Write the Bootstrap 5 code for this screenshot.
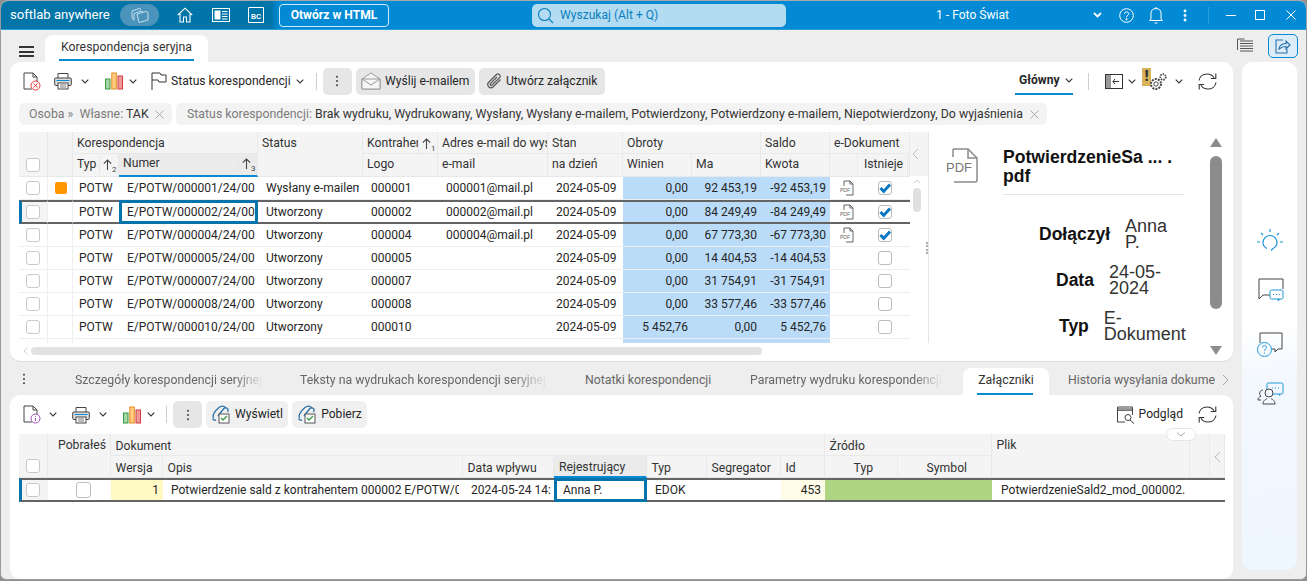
<!DOCTYPE html>
<html lang="pl">
<head>
<meta charset="utf-8">
<title>softlab anywhere</title>
<link href="https://cdn.jsdelivr.net/npm/bootstrap@5.3.0/dist/css/bootstrap.min.css" rel="stylesheet">
<style>
html,body{height:581px;overflow:hidden;background:#8f8f8f}
body{font-family:Roboto,"Liberation Sans",sans-serif;font-size:12px;color:#262626}
svg{display:block;flex:none}
.app{width:1307px;height:580px;background:#eee;border:1px solid #9a9a9a;border-top-color:#a8a8a8;border-radius:8px 8px 6px 6px;overflow:hidden}
/* title bar */
.tbar{height:29px;background:linear-gradient(90deg,#0174a8 0,#0174a8 270px,#028bd4 278px);color:#fff;border-bottom:1px solid #2a9fdc;flex:none}
.brand{font-size:13.1px;width:119px;padding-left:9px;white-space:nowrap}
.cube{width:39px;height:22px;border-radius:11px;background:#4b93bb}
.htmlbtn{height:23px;width:110px;border:1px solid #cfeaf8;border-radius:4px;background:transparent;color:#fff;font-weight:700;font-size:12.1px;padding:0}
.srch{width:254px;height:23px;background:#b3dcf3;border-radius:5px;color:#0b7fbd;font-size:12.1px;padding-left:5px;gap:6px}
.firm{font-size:12.1px;width:73px;white-space:nowrap}
.vsep{width:1px;height:17px;background:#2a9fdc}
.sp4{margin-left:4px}.sp5{margin-left:5px}.sp6{margin-left:6px}.sp8{margin-left:8px}.sp9{margin-left:9px}.sp10{margin-left:10px}.sp11{margin-left:11px}.sp12{margin-left:12px}.sp13{margin-left:13px}.sp14{margin-left:14px}.sp15{margin-left:15px}.sp16{margin-left:16px}.sp17{margin-left:17px}.sp18{margin-left:18px}.sp19{margin-left:19px}.sp21{margin-left:21px}
.sp84{margin-left:84px}.sp143{margin-left:143px}.sp150{margin-left:150px}.spn2{margin-left:-2px}
/* tabs */
.tabrow{height:32px;flex:none}
.burger{width:15px;height:11px;margin-left:18px;border-top:2px solid #333;border-bottom:2px solid #333;position:relative}
.burger::after{content:"";position:absolute;left:0;right:0;top:2.5px;height:2px;background:#333}
.maintab{width:163px;height:27px;margin-left:11px;margin-top:5px;background:#fff;border-radius:8px 8px 0 0;font-size:12.3px;position:relative;padding-left:16px;line-height:25px;color:#333}
.maintab::after,.lowtab.on::after{content:"";position:absolute;height:2px;background:#0a8ad2;bottom:0}
.maintab::after{left:14px;right:14px;bottom:1px}
.sharebtn{width:30px;height:24px;border:1px solid #0a8ad2;border-radius:5px;background:#dcedf9;padding:0;margin-left:14px}
/* cards */
.lcol{width:1223px;margin-left:9px}
.sheet{background:#fff;border-radius:10px}
.upper{height:299px;box-shadow:0 1px 0 #ddd}
.tools{height:38px;padding-left:13px;font-size:12.1px;color:#262626;flex:none}
.tbtn{height:27px;background:#e6e6e6;border:0;border-radius:5px;padding:0;font-size:12.1px;color:#262626;white-space:nowrap;gap:4px;margin-left:4px}
.tbtn.light{background:#f0f0f0}
.tbtn.bdot{width:29px;margin-left:6px}
.wmail{width:119px}.wattach{width:126px}.wview{width:82px}.wget{width:75px}
.sepv{width:1px;height:17px;background:#cfcfcf}
.glowny{width:58px;height:28px;border-bottom:2px solid #0a8ad2;font-weight:700;font-size:12.1px;padding-left:4px;gap:5px}
.warnbox{width:9px;height:18px;background:#d8b35a;color:#333;font-weight:900;font-size:15px;line-height:17px;text-align:center;margin-top:-8px}
.chips{height:22px;padding-left:9px;margin-top:3px;gap:4px;flex:none}
.chip{height:22px;background:#f3f3f3;border-radius:5px;padding:0 8px 0 10px;font-size:12.33px;white-space:nowrap;color:#7c7c7c}
.chip b{font-weight:400;color:#333}
.chipa{width:153px}.chipb{width:871px;padding-left:11px}
.chipx{margin-left:auto}
/* grids */
.gridzone{margin:7px 0 0 9px;height:226px}
.gridw{width:910px;height:211px;overflow:hidden}
.tw{width:891px;flex:none}
.grid{table-layout:fixed;border-collapse:separate;border-spacing:0;width:100%;margin:0;font-size:12px;color:#262626}
.grid>*>tr>*{padding:0;border:0;box-shadow:none;background:transparent;vertical-align:middle;white-space:nowrap;overflow:hidden;font-weight:400}
.grid>thead>tr>th{background:#f4f4f4;height:22px;border-right:1px solid #e9e9e9;border-bottom:1px solid #e9e9e9;padding-left:4px;color:#333;font-size:12.2px}
.grid>thead>tr.drop>th{padding-top:2px}
.grid>thead>tr.lift>th{padding-bottom:2px}
.grid>thead>tr>th.ptop{padding-top:2px;vertical-align:top}
.grid>thead>tr>th.thcb{padding:0 0 0 7px;vertical-align:bottom}
.grid>tbody>tr>td{height:23px;border-bottom:1px solid #eee;padding-left:8px}
.grid>tbody>tr>td.cb{padding-left:7px;border-right:1px solid #eee}
.grid>tbody>tr>td.mk{border-right:1px solid #eee}
.grid>tbody>tr>td.p6{padding-left:6px}
.grid>tbody>tr>td.clr{padding-right:4px}
.clipt{overflow:hidden}
.grid>tbody>tr>td.num{text-align:right;padding:0 4px 0 0;background:#badcf8}
.grid>tbody>tr>td.ck{text-align:center;padding-left:0}
.grid>tbody>tr>td.ckp{padding-left:6px}
.grid>tbody>tr>td.ckq{padding-left:4px}
.grid>tbody>tr.sel>td{border-top:2px solid #646464;border-bottom:2px solid #646464}
.grid>tbody>tr.sel>td:first-child{border-left:3px solid #0673ab;padding-left:4px;background:#f4f4f4}
.grid>tbody>tr.sel>td.foc{border:3px solid #0673ab;padding-left:5px}
.grid>thead>tr>th.cur{background:#ebebeb;border-bottom:2px solid #0a8ad2}
.hs{display:flex;align-items:center;justify-content:space-between;padding-right:1px}
.hsort{position:relative;width:18px;height:19px;flex:none;border-left:1px solid #e7e7e7;padding-left:3px;display:flex;align-items:center}
.hsort span{font-size:8px;line-height:8px;position:absolute;left:12px;top:11px;color:#444}
.form-check-input.box{width:14px;height:14px;margin:0;border:1px solid #c9c9c9;border-radius:3px;display:block;float:none}
.ck .form-check-input.box{margin:0 auto;border-color:#bcbcbc}
.form-check-input.box:checked{background-color:#fff;background-size:14px;background-image:url("data:image/svg+xml,%3csvg xmlns='http://www.w3.org/2000/svg' viewBox='0 0 14 14'%3e%3cpath d='M2.500 7l3.200 3.400L12 3.400' fill='none' stroke='%230a78c4' stroke-width='3'/%3e%3c/svg%3e")}
.orng{width:12px;height:12px;border-radius:2px;background:#ff9800;margin-left:-1px}
.rail{width:19px;flex:none}
.railh{height:44px;background:#f4f4f4;padding-left:2px}
.rails{width:14px;height:168px;position:relative}
.thumb{position:absolute;left:3px;top:12px;width:8px;height:24px;background:#e0e0e0;border-radius:4px}
.thup{position:absolute;left:3px;top:3px}
.railline{border-right:1px solid #e5e5e5}
.hbar{height:15px;margin-left:4px;padding-top:4px}
.hthumb{width:731px;height:8px;background:#e2e2e2;border-radius:4px;margin-left:3px}
.grip{width:2px;height:12px;border-left:2px dotted #aaa;position:absolute;left:916px;top:180px}
/* preview */
.prev{width:294px;height:226px;font-family:"Liberation Sans",Arial,sans-serif;font-size:18px;line-height:16px;color:#333;flex:none;overflow:hidden}
.prevmain{width:281px;padding:16px 0 0 16px;flex:none}
.pname{width:181px;margin-left:58px;font-weight:700;font-size:17.6px;line-height:19px;color:#111;padding-bottom:8px;border-bottom:1px solid #e5e5e5;margin-bottom:23px}
.pline{display:flex;align-items:center;gap:15px}
.pline b{color:#111;font-size:17.5px}
.pa{margin-left:94px;margin-bottom:14px}.pb{margin-left:111px;margin-bottom:14px}.pc{margin-left:114px}
.pva{width:46px}.pvb{width:62px}.pvc{width:84px}
.pbar{width:13px;position:relative}
.pthumb{position:absolute;left:0;top:24px;width:12px;height:153px;background:#8c8c8c;border-radius:6px}
.tri{position:absolute;left:0;width:0;height:0;border-left:6px solid transparent;border-right:6px solid transparent}
.triu{top:6px;border-bottom:9px solid #8c8c8c}
.trid{top:214px;border-top:9px solid #8c8c8c}
/* low tabs */
.lowbar{height:34px;position:relative;font-size:12.3px;color:#666;flex:none}
.lowtab{position:absolute;top:7px;height:27px;line-height:24px;white-space:nowrap;overflow:hidden}
.fadeout{-webkit-mask-image:linear-gradient(90deg,#000 85%,transparent 100%);mask-image:linear-gradient(90deg,#000 85%,transparent 100%)}
.lowtab.on{left:953px;width:86px;background:#fff;border-radius:8px 8px 0 0;color:#333;text-align:center}
.lowtab.on::after{left:14px;right:16px;bottom:0}
.lt1{left:65px;width:188px}.lt2{left:290px;width:248px}.lt3{left:575px;width:130px}.lt4{left:740px;width:193px}.lt5{left:1058px;width:148px}
.lowdots{position:absolute;left:12px;top:12px}
.lownext{position:absolute;left:1212px;top:13px}
.lower{height:184px;position:relative}
.lowtools{height:39px;padding-left:13px;font-size:12.1px}
.gridlow{margin-left:9px;width:1206px;overflow:hidden;height:69px}
.gridlow .grid{width:1206px}
.gridlow .grid>thead>tr>th{padding-top:2px;padding-left:4.5px;line-height:16px}
.gridlow .grid>thead>tr.drop>th{padding-top:3px}
.gridlow .grid>thead>tr>th.thcb{padding-left:7px;padding-top:0}
.gridlow .grid>thead>tr>th.ptop{padding-top:3px}
.gridlow .grid>thead>tr>th.pob{padding-left:0;padding-right:4px}
.gridlow .grid>thead>tr>th.cur{padding-left:5px}
.gridlow .grid>tbody>tr>td{height:23px;padding-left:8px}
.gridlow .grid>tbody>tr>td.cb{border-right:0}
.gridlow .grid>tbody>tr>td.fn{padding-left:9px}
.grid>tbody>tr.sel2>td{border-top:2px solid #646464;border-bottom:2px solid #646464;height:24px}
.grid>tbody>tr.sel2>td:first-child{border-left:3px solid #0673ab;padding-left:4px;background:#f4f4f4}
.gridlow .grid>tbody>tr.sel2>td.foc{border:3px solid #0673ab;padding-left:6px}
.gridlow .grid>tbody>tr>td.yl{background:#fff9c4;text-align:right;padding:0 4px 0 0}
.gridlow .grid>tbody>tr>td.yl2{background:#fffde7;text-align:right;padding:0 4px 0 0}
.gridlow .grid>tbody>tr>td.gr{background:#aed581}
.box15.form-check-input{width:15px;height:16px;margin:0 auto}
.pill{position:absolute;left:1156px;top:33px;width:30px;height:13px;background:#fff;border:1px solid #e5e5e5;border-radius:7px}
.lowprev{position:absolute;left:1204px;top:56px}
.side{width:55px;margin-left:9px;height:508px;border-radius:10px;background:linear-gradient(175deg,#fff 0,#fff 52%,#f3f8fe 62%,#eef6fe 100%);padding-top:166px}
.sideic{margin-left:15px}
.gap23{margin-bottom:23px}.gap28{margin-bottom:28px}.gap24{margin-bottom:24px}
/* column widths */
.c20{width:20px}.c25{width:25px}.c28{width:28px}.c29{width:29px}.c44{width:44px}.c46{width:46px}.c50{width:50px}.c52{width:52px}.c60{width:60px}.c63{width:63px}.c69{width:69px}.c73{width:73px}.c74{width:74px}.c75{width:75px}.c91{width:91px}.c93{width:93px}.c94{width:94px}.c105{width:105px}.c110{width:110px}.c139{width:139px}.c198{width:198px}.c300{width:300px}
</style>
</head>
<body>
<svg width="0" height="0" class="position-absolute">
<defs>
<symbol id="chev" viewBox="0 0 8 5"><path d="M.7.7 4 4 7.3.7" fill="none" stroke="#333" stroke-width="1.1"/></symbol>
<symbol id="arr" viewBox="0 0 9 11"><path d="M4.500 11V1M.8 4.700 4.500 1l3.700 3.700" fill="none" stroke="#444" stroke-width="1.100"/></symbol>
<symbol id="xx" viewBox="0 0 9 9"><path d="M.5.5l8 8M8.500.5l-8 8" stroke="#aaa"/></symbol>
<symbol id="sync" viewBox="0 0 19 19"><path d="M1 8.500C1.600 4.500 5 2 9 2c3.200 0 5.600 1.300 7 3.800M18 10.500C17.400 14.500 14 17 10 17c-3.200 0-5.600-1.300-7-3.800" fill="none" stroke="#333" stroke-width="1.100"/><path d="M17.800 1.500v5h-5M1.200 17.500v-5h5" fill="none" stroke="#333" stroke-width="1.100"/></symbol>
<symbol id="prt" viewBox="0 0 18 18"><path d="M4 6V1.500h10V6" fill="#fff" stroke="#444"/><rect x=".7" y="6" width="16.600" height="7.500" rx="1" fill="#ddd" stroke="#444"/><path d="M2.500 8.500h13" stroke="#0a8ad2"/><rect x="4" y="11" width="10" height="6" fill="#fff" stroke="#444"/><path d="M6 13h6M6 15h6" stroke="#777"/></symbol>
<symbol id="bars" viewBox="0 0 18 18"><rect x=".5" y="7" width="4.500" height="10" fill="#a5d6a7" stroke="#3a9a3f"/><rect x="6.800" y="1" width="4.500" height="16" fill="#ffcc80" stroke="#e08a1e"/><rect x="13" y="4" width="4.500" height="13" fill="#ef9a9a" stroke="#d93a3a"/></symbol>
<symbol id="page" viewBox="0 0 18 19"><path d="M1 1h9l4 4v5M10 1v4h4M1 1v16h8" fill="none" stroke="#444"/></symbol>
<symbol id="clip" viewBox="0 0 20 20"><path d="M7 11 12.500 4c2-2.500 6-.5 4 3M3 13c-3-2 2-8 5-10.500 2.500-2 5-1.500 6.500 0M5 15c-2 .5-3 0-3.500-1.500" fill="none" stroke="#2a6fa8" stroke-width="1.300"/><rect x="8" y="9" width="10" height="9" fill="#fff" stroke="#555"/><path d="M10 13l2 2 4-4" fill="none" stroke="#3a9a3f" stroke-width="1.300"/></symbol>
<symbol id="dots" viewBox="0 0 4 14"><circle cx="2" cy="2" r="1.200" fill="#444"/><circle cx="2" cy="7" r="1.200" fill="#444"/><circle cx="2" cy="12" r="1.200" fill="#444"/></symbol>
<symbol id="mpdf" viewBox="0 0 16 16"><path d="M5 1h6l3 3v11H7M11 1v3h3M5 1v5" fill="none" stroke="#555" stroke-width=".9"/><rect x="1" y="7" width="9" height="5" fill="#fff"/><text x="1" y="11.500" font-size="5" fill="#666" font-family="Liberation Sans">PDF</text></symbol>
</defs>
</svg>
<div class="app d-flex flex-column">
  <header class="tbar d-flex align-items-center">
    <span class="brand">softlab anywhere</span>
    <span class="cube d-flex align-items-center justify-content-center"><svg width="18" height="16" viewBox="0 0 18 16" fill="none" stroke="#cfe6f3" stroke-width=".9"><path d="M1 4l7-2.500 2 1M3 6.500 10 4l2 1M1 4v7l2 1.500M3 6.500v7M6 7l9-2.500 2 1V13l-9 2.500z"/></svg></span>
    <svg class="sp18" width="16" height="16" viewBox="0 0 16 16" fill="none" stroke="#fff" stroke-width="1.100"><path d="M.8 8 8 1.200 15.200 8M3 6.500V15h3.500v-5h3v5H13V6.500"/></svg>
    <svg class="sp19" width="18" height="14" viewBox="0 0 18 14" fill="none" stroke="#fff"><rect x=".5" y=".5" width="17" height="13"/><rect x="3" y="3" width="5" height="8" fill="#fff"/><path d="M10 3.500h5.500M10 6h5.500M10 8.500h5.500M10 11h5.500"/></svg>
    <svg class="sp18" width="16" height="16" viewBox="0 0 16 16" fill="none" stroke="#fff"><path d="M1 .5h14.500v15H.5V.5"/><text x="3" y="12" font-size="7" font-weight="700" fill="#fff" stroke="none" font-family="Liberation Sans">BC</text></svg>
    <button type="button" class="htmlbtn btn sp15">Otwórz w HTML</button>
    <div class="srch d-flex align-items-center sp143"><svg width="17" height="17" viewBox="0 0 17 17" fill="none" stroke="#0b7fbd" stroke-width="1.100"><circle cx="7.500" cy="7.500" r="6"/><path d="M12 12l4 4"/></svg><span>Wyszukaj (Alt + Q)</span></div>
    <span class="firm sp150">1 - Foto Świat</span>
    <svg class="sp84" width="9" height="6" viewBox="0 0 9 6"><path d="M1 1l3.500 3.500L8 1" fill="none" stroke="#fff" stroke-width="1.800"/></svg>
    <svg class="sp17" width="15" height="15" viewBox="0 0 15 15" fill="none" stroke="#fff"><circle cx="7.500" cy="7.500" r="6.800"/><path d="M5.500 5.800c0-2.600 4.200-2.600 4.200 0 0 1.500-2.200 1.700-2.200 3.400"/><circle cx="7.500" cy="11.200" r=".6" fill="#fff"/></svg>
    <svg class="sp14" width="16" height="18" viewBox="0 0 16 18" fill="none" stroke="#fff"><path d="M3 13V7c0-6 10-6 10 0v6l1.500 1.500h-13zM6.500 17h3M8 1v1"/></svg>
    <svg class="sp19" width="4" height="13" viewBox="0 0 4 13"><circle cx="2" cy="2" r="1.400" fill="#fff"/><circle cx="2" cy="6.500" r="1.400" fill="#fff"/><circle cx="2" cy="11" r="1.400" fill="#fff"/></svg>
    <span class="vsep sp21"></span>
    <svg class="sp17" width="10" height="3" viewBox="0 0 10 3"><path d="M0 1.500h10" stroke="#fff"/></svg>
    <svg class="sp19" width="10" height="10" viewBox="0 0 10 10"><rect x=".5" y=".5" width="9" height="9" fill="none" stroke="#fff"/></svg>
    <svg class="sp21" width="10" height="10" viewBox="0 0 10 10"><path d="M.5.5l9 9M9.500.5l-9 9" stroke="#fff"/></svg>
  </header>

  <div class="tabrow d-flex align-items-start">
    <span class="burger mt-3"></span>
    <div class="maintab">Korespondencja seryjna</div>
    <svg class="ms-auto mt-2" width="17" height="15" viewBox="0 0 17 15" fill="none" stroke="#555"><path d="M.5 1h7M.5 1v11M3 3h13M3 5.500h13M3 8h13M3 10.500h13M3 13h13"/></svg>
    <button type="button" class="sharebtn btn mt-1 me-2 d-flex align-items-center justify-content-center"><svg width="16" height="15" viewBox="0 0 16 15" fill="none" stroke="#2a6fa8" stroke-width="1.100"><path d="M8 1H1v13h11v-4"/><path d="M4 10c.5-3.500 3-5.500 7-5.500V2l4 4-4 4V7.500c-3 0-5 1-7 2.500z" fill="#cde4f5"/></svg></button>
  </div>

  <div class="d-flex">
    <div class="lcol d-flex flex-column">
      <section class="sheet upper d-flex flex-column position-relative">
        <div class="tools d-flex align-items-center">
          <svg width="18" height="19" viewBox="0 0 18 19"><use href="#page"/><circle cx="12.500" cy="13.500" r="4.500" fill="#fff" stroke="#e53935"/><path d="M10.500 11.500l4 4M14.500 11.500l-4 4" stroke="#e53935"/></svg>
          <svg class="sp13" width="18" height="18"><use href="#prt"/></svg>
          <svg class="sp9" width="8" height="5"><use href="#chev"/></svg>
          <svg class="sp16" width="18" height="18"><use href="#bars"/></svg>
          <svg class="sp6" width="8" height="5"><use href="#chev"/></svg>
          <svg class="sp14" width="16" height="18" viewBox="0 0 16 18" fill="none" stroke="#333"><path d="M1 18V1h8l1 2h5v7H8L7 8H1"/></svg>
          <span class="sp4">Status korespondencji</span>
          <svg class="sp5" width="8" height="5"><use href="#chev"/></svg>
          <span class="sepv sp12"></span>
          <button type="button" class="tbtn btn bdot d-flex align-items-center justify-content-center"><svg width="4" height="12"><use href="#dots"/></svg></button>
          <button type="button" class="tbtn btn wmail d-flex align-items-center justify-content-center"><svg width="20" height="18" viewBox="0 0 20 18" fill="#f6f6f6" stroke="#999"><path d="M1 7l9-6 9 6v10H1z"/><path d="M1 7h18v10H1zM1 7l9 6 9-6"/></svg>Wyślij e-mailem</button>
          <button type="button" class="tbtn btn wattach d-flex align-items-center justify-content-center"><svg width="16" height="17" viewBox="0 0 16 17" fill="none" stroke="#555" stroke-width="1.200"><path d="M14.500 6.500 7 14a3.200 3.200 0 0 1-4.500-4.500l8-8a2.200 2.200 0 0 1 3.100 3.100L6 12.200a1 1 0 0 1-1.500-1.500L11 4"/></svg>Utwórz załącznik</button>
          <div class="glowny d-flex align-items-center ms-auto">Główny <svg width="8" height="5"><use href="#chev"/></svg></div>
          <span class="sepv sp15"></span>
          <svg class="sp16" width="18" height="15" viewBox="0 0 18 15" fill="none" stroke="#333"><rect x=".5" y=".5" width="17" height="14"/><rect x="1" y="1" width="5" height="13" fill="#999" stroke="none"/><path d="M14 7.500H8M10 5 8 7.500l2 2.500"/></svg>
          <svg class="sp5" width="8" height="5"><use href="#chev"/></svg>
          <span class="warnbox sp6">!</span>
          <svg class="spn2" width="18" height="19" viewBox="0 0 18 19" fill="none" stroke="#444"><circle cx="7" cy="12" r="5" stroke-dasharray="2 1.100" stroke-width="2"/><circle cx="7" cy="12" r="2.200"/><circle cx="14" cy="5" r="2.800" stroke-dasharray="1.500 1" stroke-width="1.700"/></svg>
          <svg class="sp8" width="8" height="5"><use href="#chev"/></svg>
          <svg class="sp15" width="19" height="19"><use href="#sync"/></svg>
          <span class="sp16"></span>
        </div>
        <div class="chips d-flex">
          <div class="chip chipa d-flex align-items-center"><span>Osoba » &nbsp;Własne: <b>TAK</b></span><svg class="chipx" width="9" height="9"><use href="#xx"/></svg></div>
          <div class="chip chipb d-flex align-items-center"><span>Status korespondencji: <b>Brak wydruku, Wydrukowany, Wysłany, Wysłany e-mailem, Potwierdzony, Potwierdzony e-mailem, Niepotwierdzony, Do wyjaśnienia</b></span><svg class="chipx" width="9" height="9"><use href="#xx"/></svg></div>
        </div>
        <div class="gridzone d-flex">
          <div>
          <div class="gridw d-flex">
            <div class="tw">
              <table class="table grid">
                <colgroup><col class="c29"><col class="c25"><col class="c46"><col class="c139"><col class="c105"><col class="c75"><col class="c110"><col class="c75"><col class="c69"><col class="c69"><col class="c69"><col class="c28"><col class="c50"><col></colgroup>
                <thead>
                  <tr class="drop"><th rowspan="2" class="thcb"><input class="form-check-input box mb-1" type="checkbox" aria-label="Zaznacz"></th><th rowspan="2"></th><th colspan="2">Korespondencja</th><th rowspan="2" class="ptop">Status</th><th><div class="hs"><span class="overflow-hidden">Kontrahen</span><span class="hsort"><svg width="9" height="11"><use href="#arr"/></svg><span>1</span></span></div></th><th>Adres e-mail do wys</th><th>Stan</th><th colspan="2">Obroty</th><th>Saldo</th><th colspan="3">e-Dokument</th></tr>
                  <tr class="lift"><th><div class="hs"><span>Typ</span><span class="hsort"><svg width="9" height="11"><use href="#arr"/></svg><span>2</span></span></div></th><th class="cur"><div class="hs"><span>Numer</span><span class="hsort"><svg width="9" height="11"><use href="#arr"/></svg><span>3</span></span></div></th><th>Logo</th><th>e-mail</th><th>na dzień</th><th>Winien</th><th>Ma</th><th>Kwota</th><th></th><th class="text-end pe-1">Istnieje</th><th></th></tr>
                </thead>
                <tbody>
                  <tr><td class="cb"><input class="form-check-input box" type="checkbox" aria-label="w"></td><td class="mk"><div class="orng"></div></td><td class="p6">POTW</td><td>E/POTW/000001/24/00</td><td class="clr"><div class="clipt">Wysłany e-mailem</div></td><td>000001</td><td>000001@mail.pl</td><td>2024-05-09</td><td class="num">0,00</td><td class="num">92 453,19</td><td class="num">-92 453,19</td><td class="ck ckp"><svg class="mx-auto" width="16" height="16"><use href="#mpdf"/></svg></td><td class="ck ckq"><input class="form-check-input box" type="checkbox" checked aria-label="w"></td><td></td></tr>
                  <tr class="sel"><td class="cb"><input class="form-check-input box" type="checkbox" aria-label="w"></td><td class="mk"></td><td class="p6">POTW</td><td class="foc">E/POTW/000002/24/00</td><td>Utworzony</td><td>000002</td><td>000002@mail.pl</td><td>2024-05-09</td><td class="num">0,00</td><td class="num">84 249,49</td><td class="num">-84 249,49</td><td class="ck ckp"><svg class="mx-auto" width="16" height="16"><use href="#mpdf"/></svg></td><td class="ck ckq"><input class="form-check-input box" type="checkbox" checked aria-label="w"></td><td></td></tr>
                  <tr><td class="cb"><input class="form-check-input box" type="checkbox" aria-label="w"></td><td class="mk"></td><td class="p6">POTW</td><td>E/POTW/000004/24/00</td><td>Utworzony</td><td>000004</td><td>000004@mail.pl</td><td>2024-05-09</td><td class="num">0,00</td><td class="num">67 773,30</td><td class="num">-67 773,30</td><td class="ck ckp"><svg class="mx-auto" width="16" height="16"><use href="#mpdf"/></svg></td><td class="ck ckq"><input class="form-check-input box" type="checkbox" checked aria-label="w"></td><td></td></tr>
                  <tr><td class="cb"><input class="form-check-input box" type="checkbox" aria-label="w"></td><td class="mk"></td><td class="p6">POTW</td><td>E/POTW/000005/24/00</td><td>Utworzony</td><td>000005</td><td></td><td>2024-05-09</td><td class="num">0,00</td><td class="num">14 404,53</td><td class="num">-14 404,53</td><td></td><td class="ck ckq"><input class="form-check-input box" type="checkbox" aria-label="w"></td><td></td></tr>
                  <tr><td class="cb"><input class="form-check-input box" type="checkbox" aria-label="w"></td><td class="mk"></td><td class="p6">POTW</td><td>E/POTW/000007/24/00</td><td>Utworzony</td><td>000007</td><td></td><td>2024-05-09</td><td class="num">0,00</td><td class="num">31 754,91</td><td class="num">-31 754,91</td><td></td><td class="ck ckq"><input class="form-check-input box" type="checkbox" aria-label="w"></td><td></td></tr>
                  <tr><td class="cb"><input class="form-check-input box" type="checkbox" aria-label="w"></td><td class="mk"></td><td class="p6">POTW</td><td>E/POTW/000008/24/00</td><td>Utworzony</td><td>000008</td><td></td><td>2024-05-09</td><td class="num">0,00</td><td class="num">33 577,46</td><td class="num">-33 577,46</td><td></td><td class="ck ckq"><input class="form-check-input box" type="checkbox" aria-label="w"></td><td></td></tr>
                  <tr><td class="cb"><input class="form-check-input box" type="checkbox" aria-label="w"></td><td class="mk"></td><td class="p6">POTW</td><td>E/POTW/000010/24/00</td><td>Utworzony</td><td>000010</td><td></td><td>2024-05-09</td><td class="num">5 452,76</td><td class="num">0,00</td><td class="num">5 452,76</td><td></td><td class="ck ckq"><input class="form-check-input box" type="checkbox" aria-label="w"></td><td></td></tr>
                  <tr><td class="cb"><input class="form-check-input box" type="checkbox" aria-label="w"></td><td class="mk"></td><td></td><td></td><td></td><td></td><td></td><td></td><td class="num"></td><td class="num"></td><td class="num"></td><td></td><td></td><td></td></tr>
                </tbody>
              </table>
            </div>
            <div class="rail railline">
              <div class="railh d-flex align-items-center"><svg width="7" height="12" viewBox="0 0 7 12"><path d="M6 1 1 6l5 5" fill="none" stroke="#bbb"/></svg></div>
              <div class="rails"><svg class="thup" width="8" height="5" viewBox="0 0 8 5"><path d="M.7 4.300 4 1l3.300 3.300" fill="none" stroke="#ccc"/></svg><div class="thumb"></div></div>
            </div>
          </div>
          <div class="hbar d-flex"><svg width="5" height="8" viewBox="0 0 5 8"><path d="M4.500.5 1 4l3.500 3.500" fill="none" stroke="#ccc"/></svg><div class="hthumb"></div></div>
          </div>
          <div class="prev d-flex">
            <div class="prevmain">
              <svg class="position-absolute" width="34" height="35" viewBox="0 0 34 35"><path d="M8 1h15l9 9v22a2 2 0 0 1-2 2H9" fill="none" stroke="#8a8a8a" stroke-width="1.500"/><path d="M23 1v9h9M8 1v8" fill="none" stroke="#8a8a8a" stroke-width="1.500"/><rect x="0" y="12" width="24" height="13" fill="#fff"/><text x="1" y="24" font-size="13" fill="#777" font-family="Liberation Sans">PDF</text></svg>
              <div class="pname">PotwierdzenieSa ... . pdf</div>
              <div class="pline pa"><b>Dołączył</b><span class="pva">Anna P.</span></div>
              <div class="pline pb"><b>Data</b><span class="pvb">24-05-2024</span></div>
              <div class="pline pc"><b>Typ</b><span class="pvc">E-Dokument</span></div>
            </div>
            <div class="pbar"><span class="tri triu"></span><div class="pthumb"></div><span class="tri trid"></span></div>
          </div>
        </div>
        <div class="grip"></div>
      </section>

      <nav class="lowbar">
        <svg class="lowdots" width="4" height="12"><use href="#dots"/></svg>
        <span class="lowtab lt1 fadeout">Szczegóły korespondencji seryjnej</span>
        <span class="lowtab lt2 fadeout">Teksty na wydrukach korespondencji seryjnej</span>
        <span class="lowtab lt3">Notatki korespondencji</span>
        <span class="lowtab lt4 fadeout">Parametry wydruku korespondencji</span>
        <span class="lowtab on">Załączniki</span>
        <span class="lowtab lt5">Historia wysyłania dokume</span>
        <svg class="lownext" width="7" height="12" viewBox="0 0 7 12"><path d="M1 1l5 5-5 5" fill="none" stroke="#aaa"/></svg>
      </nav>

      <section class="sheet lower">
        <div class="lowtools d-flex align-items-center">
          <svg width="18" height="19" viewBox="0 0 18 19"><use href="#page"/><circle cx="12.500" cy="13.500" r="4.500" fill="#fff" stroke="#a04ab0"/><path d="M12.500 11v.8M12.500 13v3" stroke="#a04ab0"/></svg>
          <svg class="sp8" width="8" height="5"><use href="#chev"/></svg>
          <svg class="sp15" width="18" height="18"><use href="#prt"/></svg>
          <svg class="sp9" width="8" height="5"><use href="#chev"/></svg>
          <svg class="sp16" width="18" height="18"><use href="#bars"/></svg>
          <svg class="sp6" width="8" height="5"><use href="#chev"/></svg>
          <span class="sepv sp11"></span>
          <button type="button" class="tbtn btn bdot d-flex align-items-center justify-content-center"><svg width="4" height="12"><use href="#dots"/></svg></button>
          <button type="button" class="tbtn btn light wview d-flex align-items-center justify-content-center"><svg width="20" height="20"><use href="#clip"/></svg>Wyświetl</button>
          <button type="button" class="tbtn btn light wget d-flex align-items-center justify-content-center"><svg width="20" height="20"><use href="#clip"/></svg>Pobierz</button>
          <svg class="ms-auto" width="18" height="18" viewBox="0 0 18 18" fill="none" stroke="#444"><path d="M.5 1h15v15H.5zM.5 4.500h15"/><rect x="1" y="1.500" width="14" height="3" fill="#999" stroke="none"/><rect x="8" y="9" width="9" height="8" fill="#fff" stroke="none"/><circle cx="11" cy="11.500" r="3"/><path d="M13 14l4 3.500"/></svg>
          <span class="sp4">Podgląd</span>
          <svg class="sp15" width="19" height="19"><use href="#sync"/></svg>
          <span class="sp16"></span>
        </div>
        <div class="gridlow">
          <table class="table grid">
            <colgroup><col class="c29"><col class="c63"><col class="c52"><col class="c300"><col class="c91"><col class="c93"><col class="c60"><col class="c74"><col class="c44"><col class="c73"><col class="c94"><col class="c198"><col class="c20"><col></colgroup>
            <thead>
              <tr class="drop"><th rowspan="2" class="thcb"><input class="form-check-input box mb-1" type="checkbox" aria-label="Zaznacz"></th><th rowspan="2" class="ptop pob text-end">Pobrałeś</th><th colspan="7">Dokument</th><th colspan="2">Źródło</th><th rowspan="2" class="ptop">Plik</th><th rowspan="2"></th><th rowspan="2"></th></tr>
              <tr><th>Wersja</th><th>Opis</th><th>Data wpływu</th><th class="cur">Rejestrujący</th><th>Typ</th><th>Segregator</th><th>Id</th><th class="text-center">Typ</th><th class="text-center">Symbol</th></tr>
            </thead>
            <tbody>
              <tr class="sel2"><td class="cb"><input class="form-check-input box" type="checkbox" aria-label="w"></td><td class="ck"><input class="form-check-input box box15" type="checkbox" aria-label="w"></td><td class="yl">1</td><td class="clr"><div class="clipt">Potwierdzenie sald z kontrahentem 000002 E/POTW/0</div></td><td>2024-05-24 14:</td><td class="foc">Anna P.</td><td>EDOK</td><td></td><td class="yl2">453</td><td class="gr"></td><td class="gr"></td><td class="fn">PotwierdzenieSald2_mod_000002.</td><td></td><td></td></tr>
            </tbody>
          </table>
        </div>
        <div class="pill d-flex align-items-center justify-content-center"><svg width="10" height="5" viewBox="0 0 10 5"><path d="M1 .5 5 4 9 .5" fill="none" stroke="#aaa"/></svg></div>
        <svg class="lowprev" width="7" height="12" viewBox="0 0 7 12"><path d="M6 1 1 6l5 5" fill="none" stroke="#bbb"/></svg>
      </section>
    </div>

    <aside class="side">
      <svg class="sideic gap23" width="26" height="26" viewBox="0 0 26 26" fill="none" stroke="#1f97d8" stroke-width="1.200"><path d="M10 20.500C7 19 6 16.500 6 14.500a7 7 0 0 1 14 0c0 2-1 4.500-4 6l-2 2"/><path d="M13 1v3M4 5l2 2M22 5l-2 2M0 14h3M23 14h3"/></svg>
      <svg class="sideic gap28" width="27" height="26" viewBox="0 0 27 26" fill="none" stroke="#444"><path d="M13 18H6l-4 4v-5V2h24v10"/><rect x="13" y="13" width="13" height="9" rx="1.500" fill="#fff" stroke="#1f97d8"/><path d="M16 17.500h1M19 17.500h1M22 17.500h1" stroke="#1f97d8"/><path d="M21 22v2l2-2" stroke="#1f97d8"/></svg>
      <svg class="sideic gap24" width="27" height="27" viewBox="0 0 27 27" fill="none" stroke="#444"><path d="M3 12V2h22v16h-4l-3 3v-3H14"/><circle cx="7.500" cy="18.500" r="7" fill="#f8fbff" stroke="#1f97d8"/><path d="M5.500 16.500c0-2.500 4-2.500 4 0 0 1.500-2 1.500-2 3.300M7.500 21.500v1" stroke="#1f97d8"/></svg>
      <svg class="sideic" width="27" height="26" viewBox="0 0 27 26" fill="none" stroke="#444"><rect x="10" y="1" width="16" height="11" rx="1.500" stroke="#1f97d8"/><path d="M15 6h1M18 6h1M21 6h1M22 12l1 2" stroke="#1f97d8"/><circle cx="12" cy="11" r="4" fill="#f4f9fe"/><path d="M6 22c0-4 3-4.500 4-5.500M18 22c0-4-3-4.500-4-5.500M6 22h12M6 8c-4 .5-4 5-2 6-2 1-3 2-3 4h3"/></svg>
    </aside>
  </div>
</div>
</body>
</html>
